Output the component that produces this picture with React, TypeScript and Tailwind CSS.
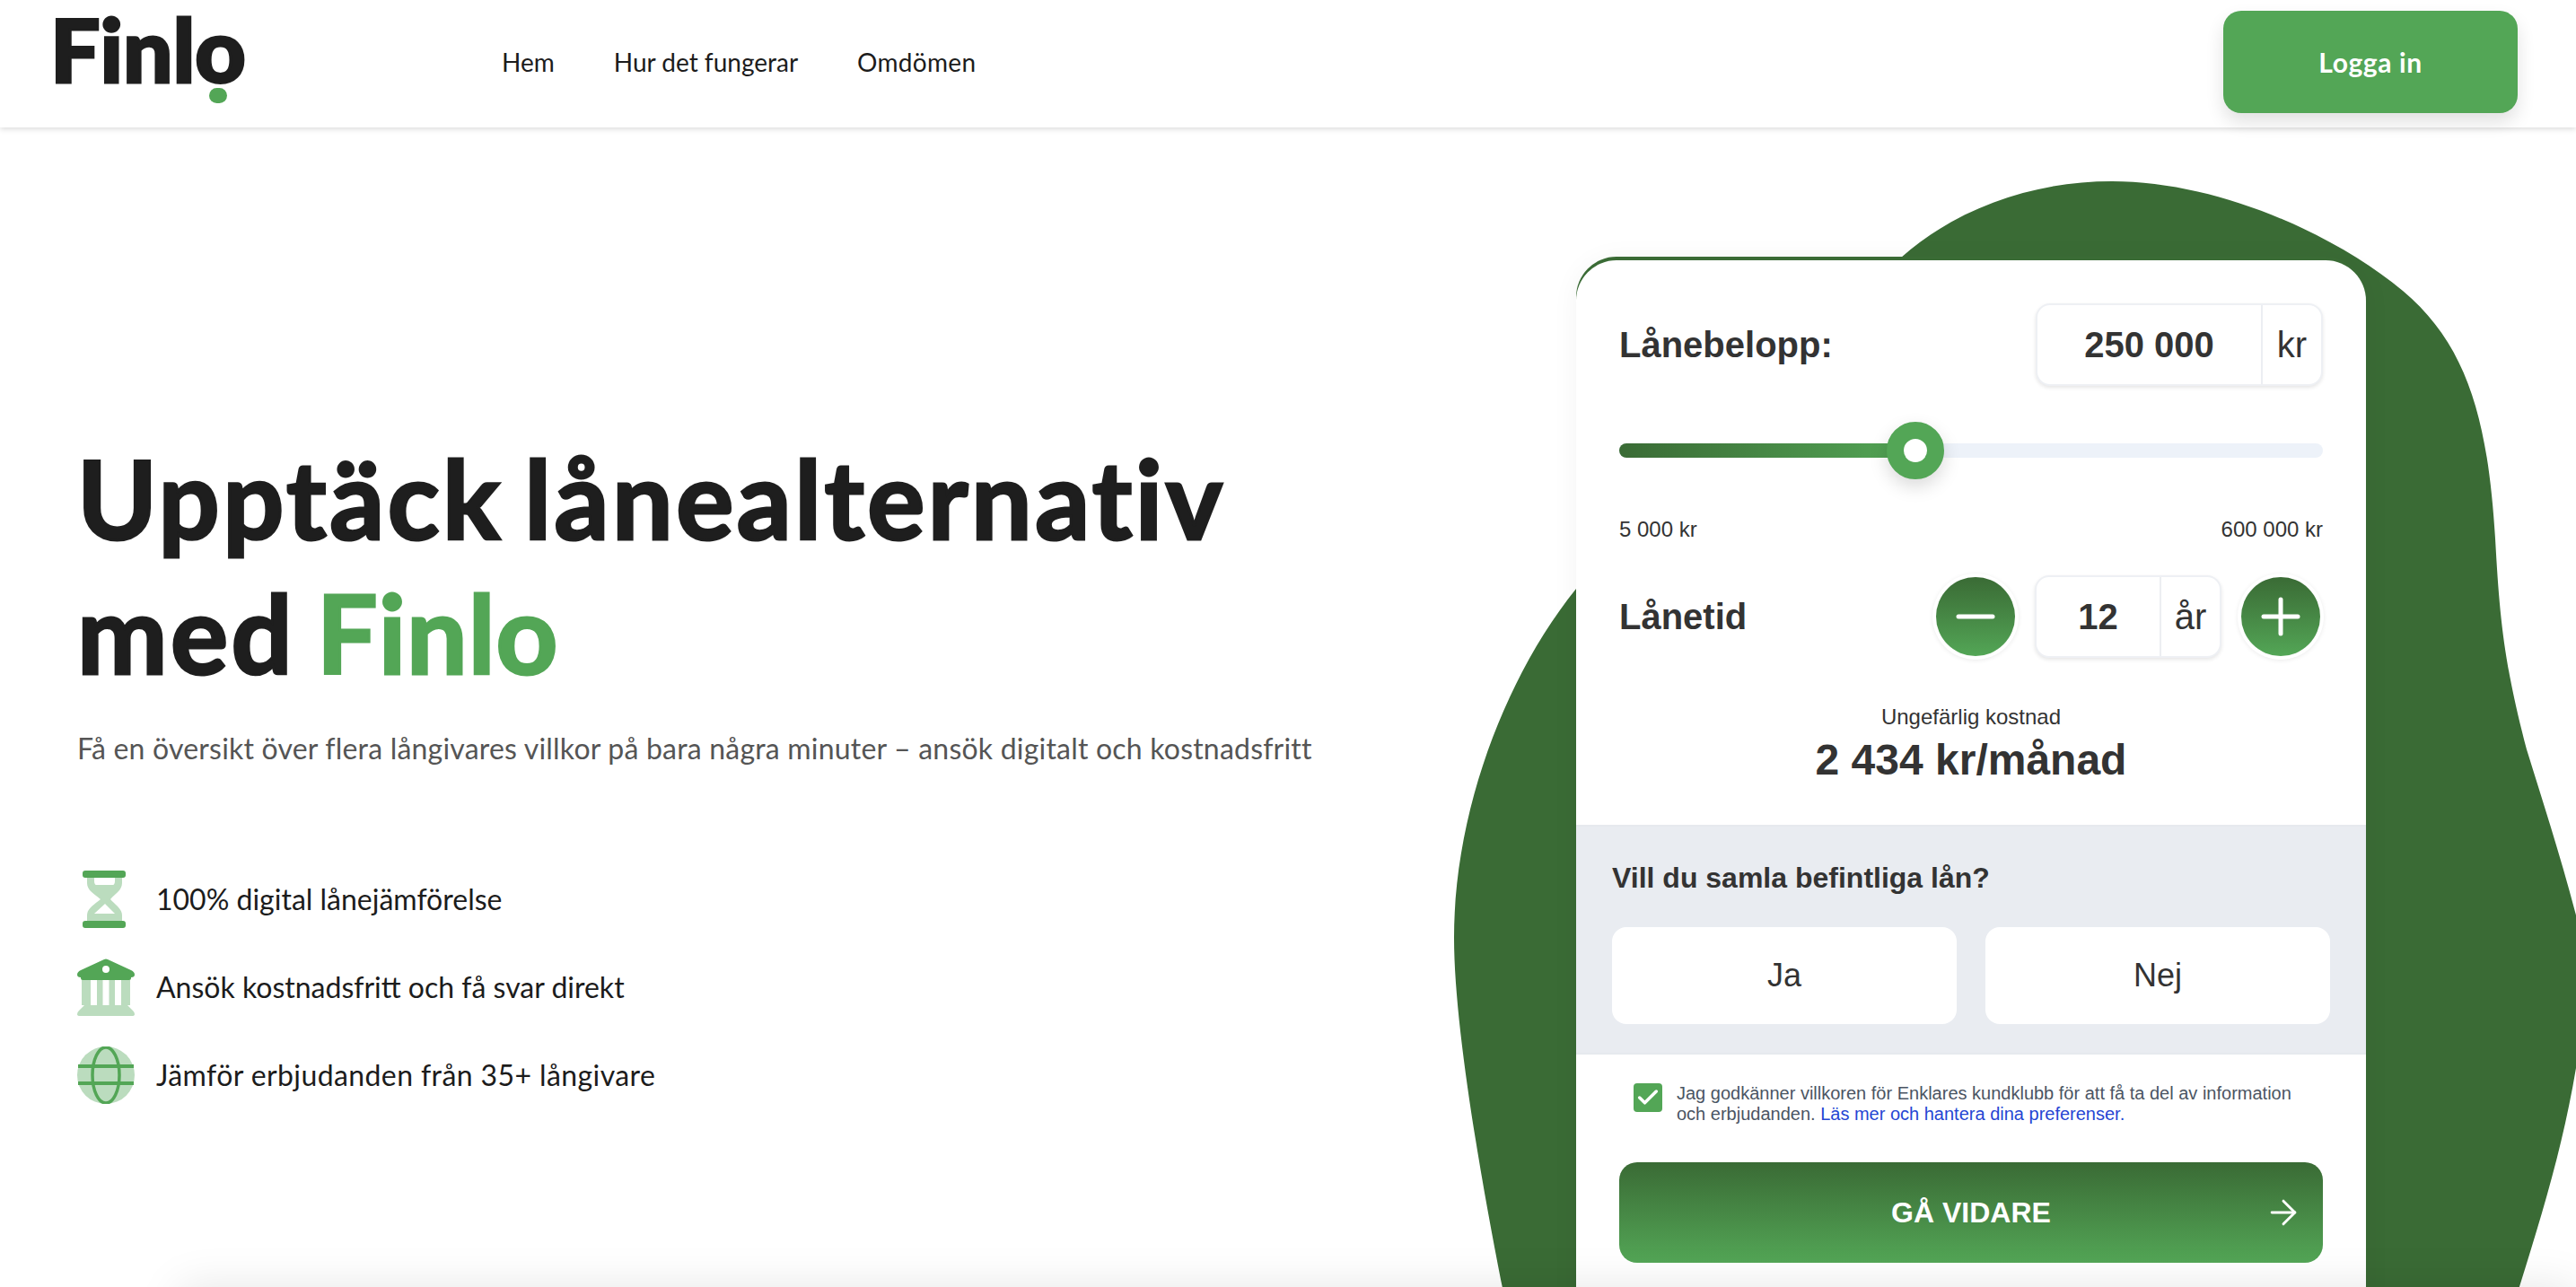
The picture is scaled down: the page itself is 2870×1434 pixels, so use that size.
import { ArrowRight, Check } from "lucide-react";

const outfit = "font-['Lato',sans-serif]";
const arial = "font-['Liberation_Sans',Arial,sans-serif]";

function HourglassIcon() {
  return (
    <svg viewBox="0 0 64 64" className="h-16 w-16 shrink-0">
      <path
        fillRule="evenodd"
        fill="#bbdcbe"
        d="M11 8H50V14C50 22 42 26 37 32C42 38 50 42 50 50V56H11V50C11 42 19 38 26 32C19 26 11 22 11 14ZM19 8V12C19 14 20 16 21 16H40C41 16 42 14 42 12V8ZM31 37L19 48H42Z"
      />
      <rect x="6" y="0" width="48" height="8" rx="3" fill="#53a656" />
      <rect x="6" y="56" width="48" height="8" rx="3" fill="#53a656" />
    </svg>
  );
}

function BankIcon() {
  return (
    <svg viewBox="0 0 64 64" className="h-16 w-16 shrink-0">
      <path
        fill="#bbdcbe"
        d="M5 24H15V52H5ZM22 24H28.5V52H22ZM35.500 24H42V52H35.500ZM49 24H59V52H49ZM8 52H56L62 58Q64 60 64 62Q64 64 61 64H3Q0 64 0 62Q0 60 2 58Z"
      />
      <path
        fillRule="evenodd"
        fill="#53a656"
        d="M30 1Q32 0 34 1L60 13Q64 15 64 18Q64 21 60 21V22Q60 24 58 24H6Q4 24 4 22V21Q0 21 0 18Q0 15 4 13ZM32 8A4 4 0 1 0 32 16A4 4 0 1 0 32 8Z"
      />
    </svg>
  );
}

function GlobeIcon() {
  return (
    <svg viewBox="0 0 64 64" className="h-16 w-16 shrink-0">
      <circle cx="32" cy="32" r="32" fill="#bbdcbe" />
      <g fill="none" stroke="#53a656" strokeWidth="4">
        <path d="M1 22H63M1 41H63" />
        <ellipse cx="32" cy="32" rx="15" ry="31" strokeWidth="3.500" />
      </g>
    </svg>
  );
}

function Feature({ icon, text, className = "" }: { icon: React.ReactNode; text: string; className?: string }) {
  return (
    <li className="flex h-16 items-center gap-[24px]">
      {icon}
      <span className={`${outfit} text-[32px] text-[#1c1c1c] ${className}`}>{text}</span>
    </li>
  );
}

function ValueBox({ value, unit, valueWidth, unitWidth }: { value: string; unit: string; valueWidth: string; unitWidth: string }) {
  return (
    <div className="flex h-[92px] rounded-2xl border-2 border-[#eef0f4] bg-white shadow-[0_2px_4px_rgba(0,0,0,0.1)]">
      <div className={`flex items-center justify-center border-r-2 border-[#eceef2] text-[40px] font-bold ${valueWidth}`}>{value}</div>
      <div className={`flex items-center justify-center text-[40px] ${unitWidth}`}>{unit}</div>
    </div>
  );
}

function RoundButton({ plus }: { plus?: boolean }) {
  return (
    <button className="flex h-[88px] w-[88px] items-center justify-center rounded-full bg-gradient-to-b from-[#3a6b35] to-[#53a656] shadow-[0_0_0_4px_#fff,0_1px_5px_4px_rgba(0,0,0,0.08)]">
      <svg viewBox="0 0 44 44" className="h-11 w-11" fill="none" stroke="#fff" strokeWidth="5" strokeLinecap="round">
        <path d="M3 22H41" />
        {plus && <path d="M22 3V41" />}
      </svg>
    </button>
  );
}

export default function App() {
  return (
    <div className={`relative h-[1434px] w-full overflow-hidden bg-white ${outfit}`}>
      <svg viewBox="0 0 2870 1434" className="absolute inset-0 h-full w-full">
        <path
          fill="#3a6b35"
          d="M2118 287C2180 232 2265 202 2353 202C2470 202 2600 260 2677 324C2750 385 2772 470 2780 600C2785 690 2790 740 2815 835C2835 900 2860 975 2880 1060C2890 1130 2880 1180 2870 1190C2855 1280 2830 1360 2805 1440H1675C1655 1340 1620 1150 1620 1045C1620 900 1680 750 1756 656Z"
        />
      </svg>

      <header className="relative flex h-[142px] items-center justify-between bg-white pb-1 pl-[60px] pr-[65px] shadow-[0_2px_6px_rgba(0,0,0,0.14)]">
        <div className="flex items-center">
          <div className="relative h-[95px] w-[210px]">
            <span className="-ml-1 block text-[98px] font-black leading-[65px] text-[#1e1e1e] [-webkit-text-stroke:3px_currentColor]">Finlo</span>
            <span className="absolute left-[173px] top-[76px] h-[17px] w-[20px] rounded-full bg-[#53a656]" />
          </div>
          <nav className="ml-[289px] flex gap-[66px] text-[28px] text-[#1c1c1c]">
            <a>Hem</a>
            <a>Hur det fungerar</a>
            <a className="tracking-[0.3px]">Omdömen</a>
          </nav>
        </div>
        <button className="h-[114px] w-[328px] rounded-[20px] bg-[#53a656] text-[30px] font-bold tracking-[0.6px] text-white shadow-[0_10px_20px_rgba(0,0,0,0.12)]">
          Logga in
        </button>
      </header>

      <main className="relative flex justify-between pl-[86px] pr-[234px]">
        <section className="pt-[338px]">
          <h1 className="text-[120px] font-bold leading-[150px] tracking-[3.5px] text-[#1e1e1e] [word-spacing:-9px] [-webkit-text-stroke:3px_currentColor]">
            Upptäck lånealternativ
            <br />
            med <span className="tracking-[1px] text-[#53a656]">Finlo</span>
          </h1>
          <p className="mt-[30px] text-[32px] tracking-[0.2px] text-[#555]">
            Få en översikt över flera långivares villkor på bara några minuter – ansök digitalt och kostnadsfritt
          </p>
          <ul className="mt-[112px] flex flex-col gap-[34px]">
            <Feature icon={<HourglassIcon />} text="100% digital lånejämförelse" />
            <Feature icon={<BankIcon />} text="Ansök kostnadsfritt och få svar direkt" />
            <Feature icon={<GlobeIcon />} text="Jämför erbjudanden från 35+ långivare" className="tracking-[0.4px]" />
          </ul>
        </section>

        <section className={`${arial} mt-[148px] h-[1200px] w-[880px] shrink-0 rounded-[45px] bg-white text-[#333] shadow-[0_-4px_0_#3a6b35,0_0_30px_rgba(0,0,0,0.05)]`}>
          <div className="px-12 pt-12">
            <div className="flex items-center justify-between">
              <span className="text-[40px] font-bold">Lånebelopp:</span>
              <ValueBox value="250 000" unit="kr" valueWidth="w-[251px]" unitWidth="w-[65px]" />
            </div>

            <div className="relative mt-[64px] h-4 rounded-full bg-[#edf2f9]">
              <div className="h-4 w-[329px] rounded-full bg-gradient-to-r from-[#3a6b35] to-[#53a656]" />
              <div className="absolute left-[298px] top-[-24px] h-[64px] w-[64px] rounded-full border-[19px] border-[#53a656] bg-white shadow-[0_8px_20px_rgba(0,0,0,0.15)]" />
            </div>

            <div className="mt-[66px] flex justify-between text-2xl leading-[28px]">
              <span>5 000 kr</span>
              <span>600 000 kr</span>
            </div>

            <div className="mt-[37px] flex items-center justify-between">
              <span className="text-[40px] font-bold">Lånetid</span>
              <div className="flex items-center gap-[22px] pr-[3px]">
                <RoundButton />
                <ValueBox value="12" unit="år" valueWidth="w-[139px]" unitWidth="w-[65px]" />
                <RoundButton plus />
              </div>
            </div>

            <div className="mt-[52px] text-center">
              <div className="text-2xl leading-[28px]">Ungefärlig kostnad</div>
              <div className="mt-[6px] text-[48px] font-bold leading-[56px]">2 434 kr/månad</div>
            </div>
          </div>

          <div className="mt-[44px] h-[256px] border-y-2 border-[#e6e9ee] bg-[#e9ecf1] px-10 pt-[38px]">
            <div className="text-[32px] font-bold leading-[38px]">Vill du samla befintliga lån?</div>
            <div className="mt-[36px] grid grid-cols-2 gap-8">
              <button className="h-[108px] rounded-2xl bg-white text-[36px]">Ja</button>
              <button className="h-[108px] rounded-2xl bg-white text-[36px]">Nej</button>
            </div>
          </div>

          <div className="flex gap-4 px-16 pt-[32px]">
            <div className="flex h-8 w-8 shrink-0 items-center justify-center rounded bg-[#53a656]">
              <Check className="h-7 w-7 text-white" strokeWidth={3} />
            </div>
            <p className="text-[20px] leading-[23px] text-[#4b5563]">
              Jag godkänner villkoren för Enklares kundklubb för att få ta del av information och erbjudanden.{" "}
              <a className="text-[#2546d3]">Läs mer och hantera dina preferenser.</a>
            </p>
          </div>

          <div className="px-12 pt-[42px]">
            <button className="relative flex h-[112px] w-full items-center justify-center rounded-[20px] bg-gradient-to-b from-[#3a6b35] to-[#53a656] text-[32px] font-bold text-white">
              GÅ VIDARE
              <ArrowRight className="absolute right-[22px] top-[34px] h-11 w-11" strokeWidth={1.6} />
            </button>
          </div>
        </section>
      </main>

      <div className="absolute left-[200px] right-0 top-[1434px] h-20 shadow-[0_0_50px_rgba(0,0,0,0.1)]" />
    </div>
  );
}
